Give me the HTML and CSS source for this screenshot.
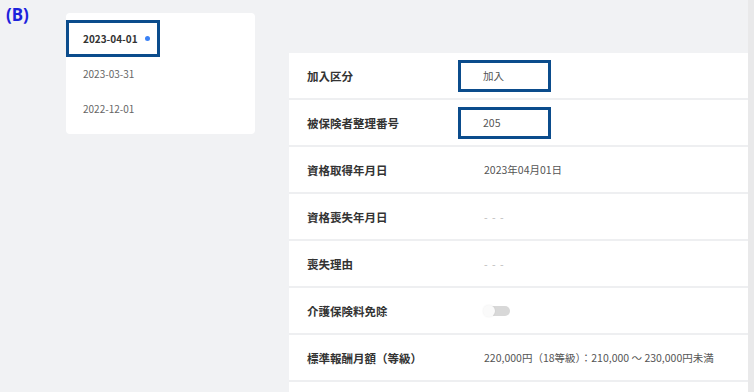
FILE: index.html
```html
<!DOCTYPE html>
<html lang="ja">
<head>
    <meta charset="UTF-8">
    <title>資格情報</title>
    <link rel="stylesheet" href="styles.css">
</head>
<body>
    <div class="tag">(B)</div>
    <div class="layout">
        <aside class="history">
            <div class="history-item active mark">2023-04-01 <span class="dot"></span></div>
            <div class="history-item">2023-03-31</div>
            <div class="history-item">2022-12-01</div>
        </aside>

        <section class="detail">
            <div class="row">
                <div class="label">加入区分</div>
                <div class="value mark">加入</div>
            </div>
            <div class="row">
                <div class="label">被保険者整理番号</div>
                <div class="value mark">205</div>
            </div>
            <div class="row">
                <div class="label">資格取得年月日</div>
                <div class="value">2023年04月01日</div>
            </div>
            <div class="row">
                <div class="label">資格喪失年月日</div>
                <div class="value muted">- - -</div>
            </div>
            <div class="row">
                <div class="label">喪失理由</div>
                <div class="value muted">- - -</div>
            </div>
            <div class="row">
                <div class="label">介護保険料免除</div>
                <div class="value"><span class="toggle"><span class="knob"></span></span></div>
            </div>
            <div class="row">
                <div class="label">標準報酬月額（等級）</div>
                <div class="value">220,000円（18等級）：210,000 ～ 230,000円未満</div>
            </div>
            <div class="row short"></div>
        </section>
        <div class="edge"></div>
    </div>
</body>
</html>
```

FILE: styles.css
```css
* {
    margin: 0;
    padding: 0;
    box-sizing: border-box;
}

body {
    background: #f1f2f4;
    font-family: "Noto Sans CJK JP", "Noto Sans", sans-serif;
    color: #333;
    width: 754px;
    height: 392px;
    overflow: hidden;
    position: relative;
}

/* Annotation label */
.tag {
    position: absolute;
    left: 6px;
    top: 3px;
    font-family: "Noto Sans", sans-serif;
    font-size: 17px;
    font-weight: 700;
    color: #1c22dc;
}

.layout {
    display: flex;
    align-items: flex-start;
    padding: 13px 0 0 66px;
    height: 100%;
}

/* History list */
.history {
    width: 189px;
    background: #fff;
    border-radius: 4px;
    padding: 7px 0 9px;
    display: flex;
    flex-direction: column;
}

.history-item {
    width: 94px;
    height: 37px;
    display: flex;
    align-items: center;
    padding-left: 17px;
    font-size: 10px;
    color: #666;
    margin-bottom: -2px;
}

.history-item.active {
    font-weight: 700;
    color: #333;
}

.dot {
    width: 5px;
    height: 5px;
    border-radius: 50%;
    background: #3b82f6;
    margin-left: 7px;
}

.mark {
    border: 3px solid #0b4c8c;
}

.history-item.mark {
    padding-left: 14px;
}

/* Detail panel */
.detail {
    margin: 40px 0 0 34px;
    width: 459px;
    display: flex;
    flex-direction: column;
    gap: 2px;
    background: #eeeff1;
}

.row {
    height: 45px;
    background: #fff;
    display: flex;
    align-items: center;
    padding-left: 18px;
}

.row.short {
    height: 20px;
}

.label {
    width: 152px;
    font-size: 11.5px;
    font-weight: 700;
    color: #333;
}

.value {
    font-size: 10.5px;
    color: #555;
    padding-left: 25px;
}

.value.mark {
    width: 93px;
    height: 32px;
    display: flex;
    align-items: center;
    padding-left: 22px;
    margin-left: -1px;
}

.muted {
    color: #bbb;
    letter-spacing: 1px;
}

.toggle {
    display: block;
    width: 26px;
    height: 10px;
    border-radius: 5px;
    background: #d8d8d8;
    position: relative;
}

.knob {
    position: absolute;
    left: -1px;
    top: -1px;
    width: 12px;
    height: 12px;
    border-radius: 50%;
    background: #fafafa;
    box-shadow: 0 0 2px rgba(0, 0, 0, 0.08);
}

.edge {
    margin-top: -13px;
    width: 6px;
    height: 392px;
    background: #e9e9ea;
}
```
